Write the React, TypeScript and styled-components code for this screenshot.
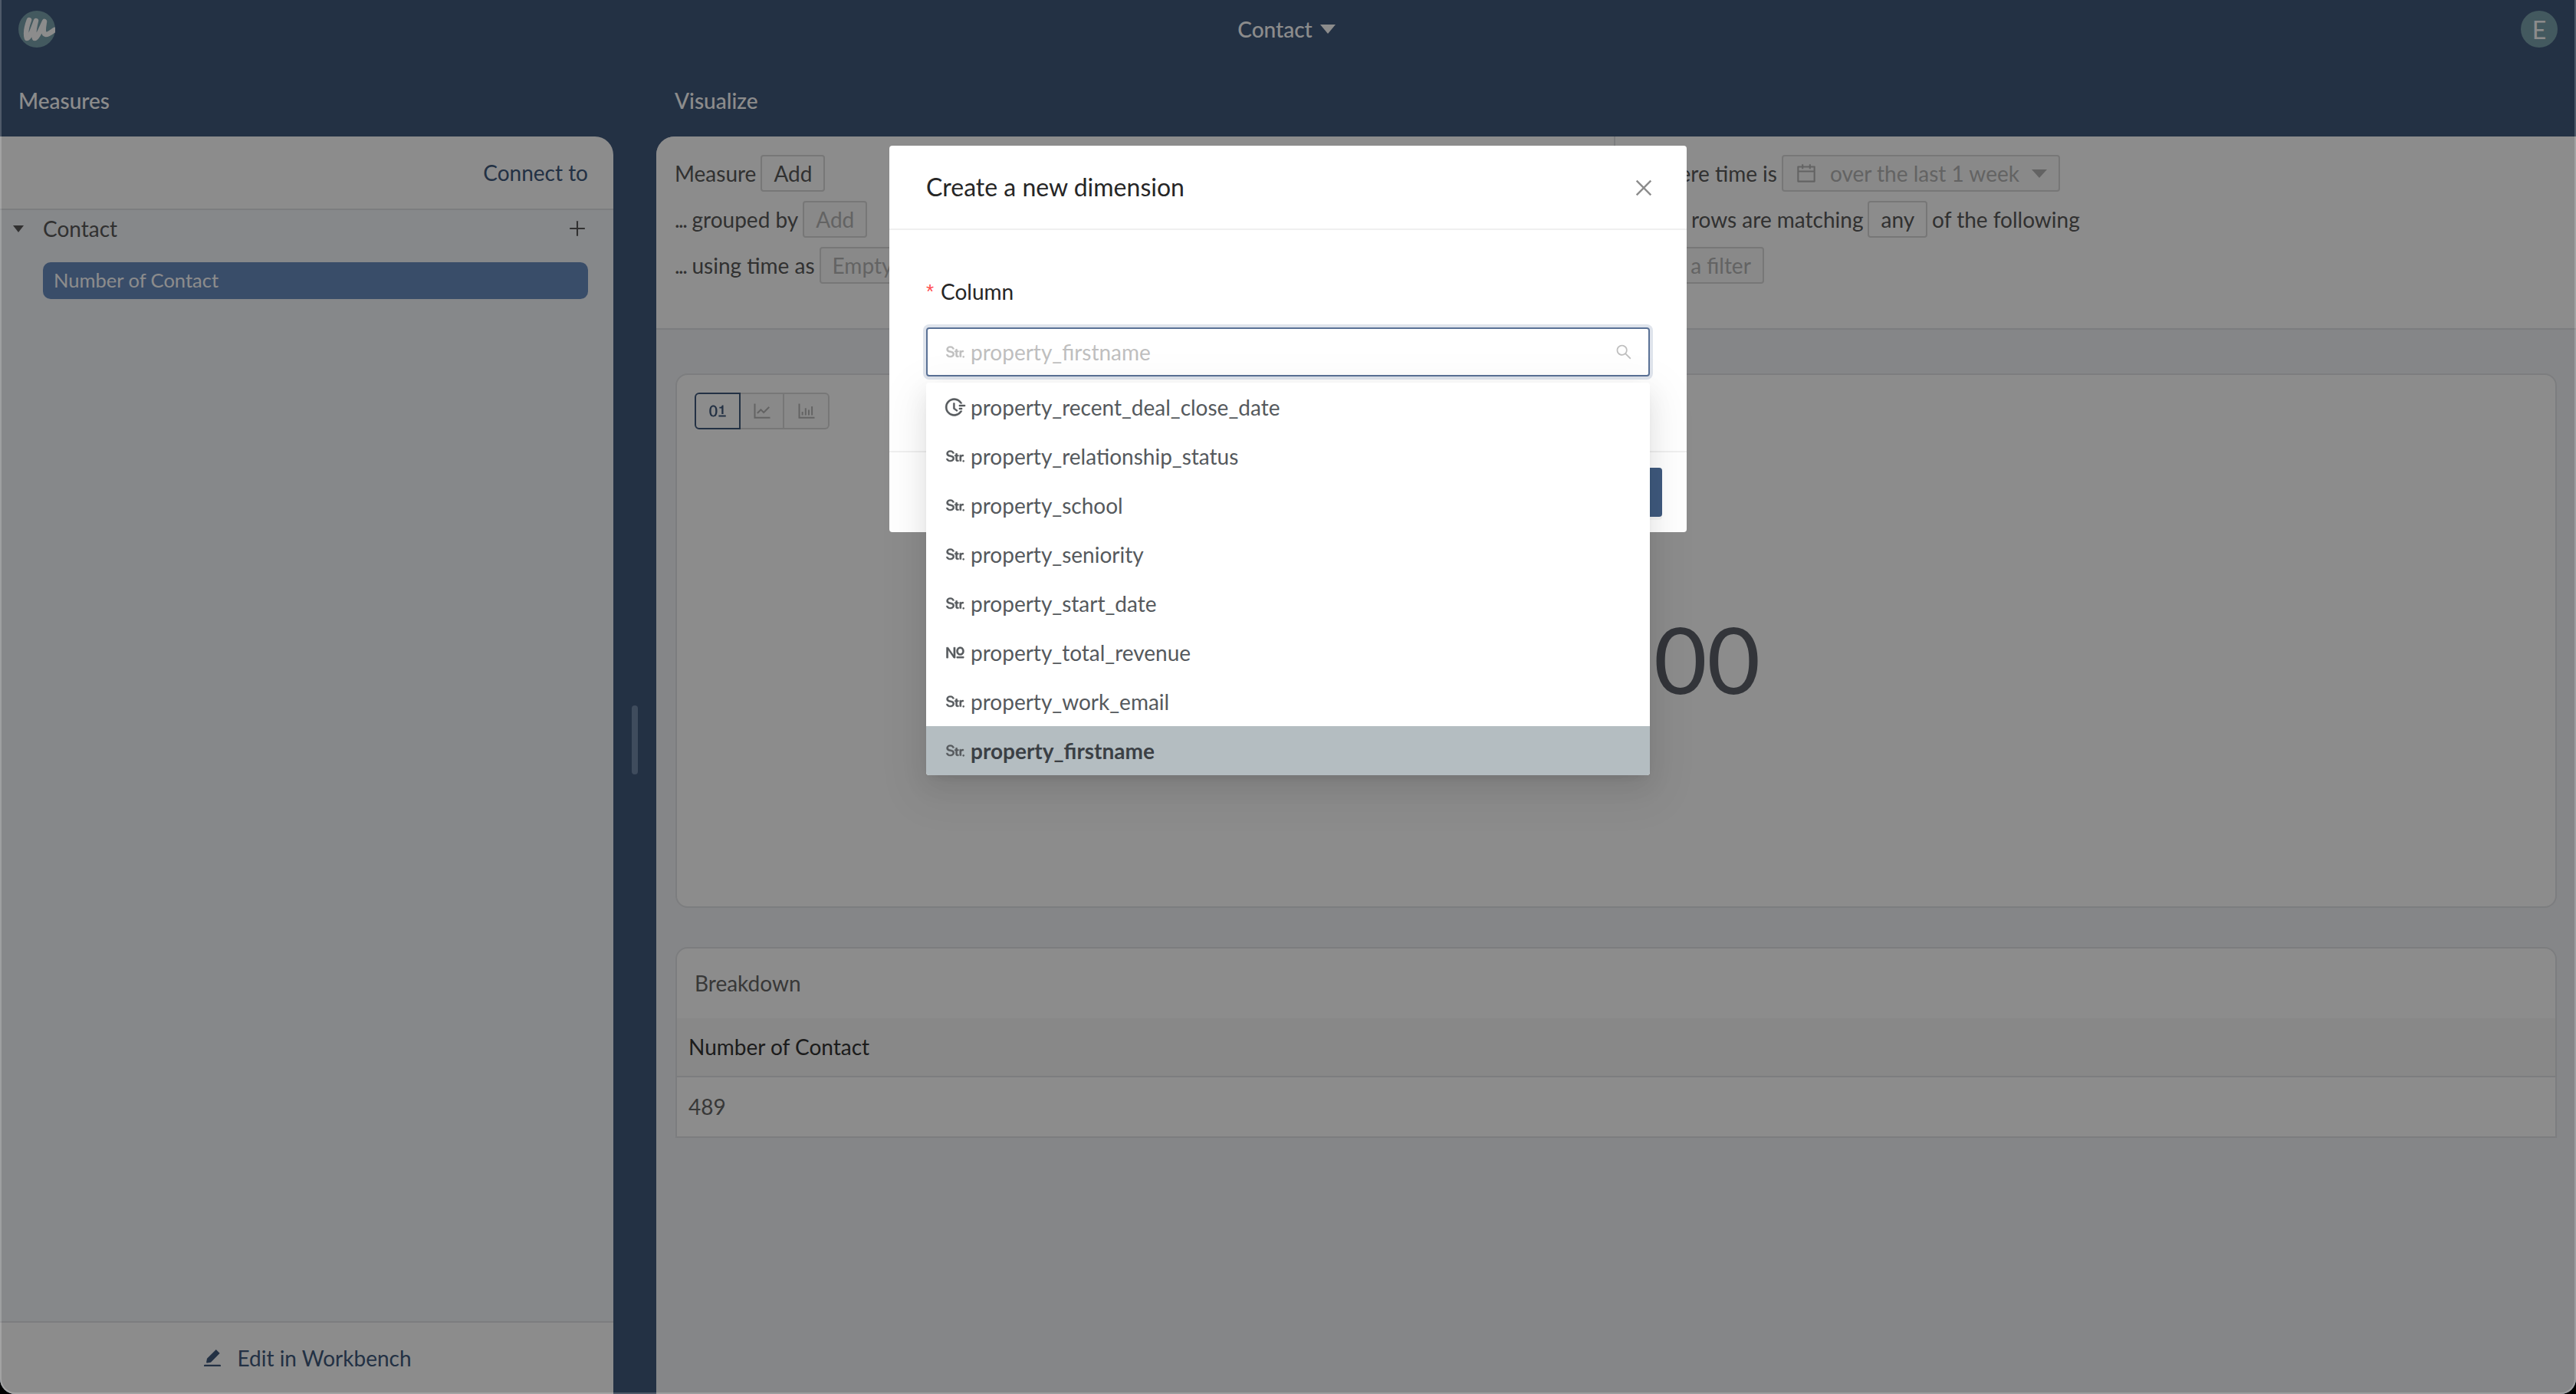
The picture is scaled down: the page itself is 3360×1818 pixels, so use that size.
import { type FC, type ReactNode } from 'react';
import {
  AiFillEdit,
  AiOutlineBarChart,
  AiOutlineCalendar,
  AiOutlineClose,
  AiOutlineFieldBinary,
  AiOutlineFieldNumber,
  AiOutlineFieldString,
  AiOutlineFieldTime,
  AiOutlineLineChart,
  AiOutlinePlus,
  AiOutlineSearch,
} from 'react-icons/ai';
import styled, { createGlobalStyle } from 'styled-components';

const GlobalStyle = createGlobalStyle`
  html, body {
    margin: 0;
    padding: 0;
    height: 1818px;
    overflow: hidden;
    background: #000;
  }
  * {
    box-sizing: border-box;
  }
  body {
    font-family: Lato, "Liberation Sans", sans-serif;
    font-size: 28px;
    color: #595959;
  }
`;

// ── Shell ──────────────────────────────────────────────────────────────────

const Shell = styled.div`
  position: relative;
  display: flex;
  flex-direction: column;
  width: 3360px;
  height: 1818px;
  overflow: hidden;
  background: #40597c;
  border-radius: 0 0 20px 20px;
`;

const TopBar = styled.header`
  display: flex;
  align-items: center;
  justify-content: space-between;
  height: 76px;
  padding: 0 24px;
  color: #fff;
`;

const Avatar = styled.div`
  display: flex;
  align-items: center;
  justify-content: center;
  width: 48px;
  height: 48px;
  border-radius: 50%;
  background: #7ba2ad;
  color: #fff;
  font-size: 32px;
`;

const TopTitle = styled.div`
  display: flex;
  align-items: center;
  gap: 10px;
  font-weight: 500;
  margin-right: 4px;
`;

const Caret = styled.span<{ $w: number; $h: number; $color: string }>`
  display: inline-block;
  flex-shrink: 0;
  width: 0;
  height: 0;
  border-left: ${(p) => p.$w / 2}px solid transparent;
  border-right: ${(p) => p.$w / 2}px solid transparent;
  border-top: ${(p) => p.$h}px solid ${(p) => p.$color};
`;

const Workspace = styled.div`
  display: flex;
  flex: 1;
  min-height: 0;
`;

const Column = styled.div<{ $width?: number }>`
  display: flex;
  flex-direction: column;
  flex: ${(p) => (p.$width ? `0 0 ${p.$width}px` : 1)};
  min-width: 0;
`;

const SectionTitle = styled.div<{ $inset: number }>`
  display: flex;
  align-items: center;
  height: 102px;
  padding: 8px 0 0 ${(p) => p.$inset}px;
  color: #fff;
  font-weight: 500;
`;

const SplitHandle = styled.div`
  flex: 0 0 56px;
  padding: 844px 24px 0;

  &::before {
    content: '';
    display: block;
    height: 90px;
    border-radius: 4px;
    background: #738aa9;
  }
`;

// ── Measures panel ─────────────────────────────────────────────────────────

const MeasuresPanel = styled.aside`
  display: flex;
  flex-direction: column;
  flex: 1;
  min-height: 0;
  background: #fff;
  border-radius: 0 24px 0 0;
  overflow: hidden;
`;

const ConnectBar = styled.div`
  display: flex;
  align-items: center;
  justify-content: flex-end;
  height: 96px;
  padding: 0 33px 0 0;
  border-bottom: 2px solid #e2e4e7;
  color: #40597c;
`;

const MeasureList = styled.div`
  flex: 1;
  background: #f5f7fb;
  padding: 0 33px 0 17px;
`;

const GroupRow = styled.div`
  display: flex;
  align-items: center;
  height: 48px;
  margin-bottom: 20px;
  color: #595959;
`;

const GroupName = styled.span`
  flex: 1;
  margin-left: 25px;
`;

const MeasureItem = styled.div`
  display: flex;
  align-items: center;
  height: 48px;
  margin-left: 39px;
  padding: 0 0 2px 14px;
  border-radius: 10px;
  background: #698cbf;
  color: #fff;
  font-size: 25.5px;
`;

const PanelFooter = styled.div`
  display: flex;
  align-items: center;
  justify-content: center;
  gap: 18px;
  height: 95px;
  padding-bottom: 2px;
  border-top: 2px solid #e2e4e7;
  color: #40597c;
`;

// ── Query builder ──────────────────────────────────────────────────────────

const VisualizePanel = styled.main`
  display: flex;
  flex-direction: column;
  flex: 1;
  min-height: 0;
  background: #f2f4f7;
  border-radius: 24px 0 0 0;
  overflow: hidden;
`;

const QueryBar = styled.section`
  display: grid;
  grid-template-columns: 1249px 1fr;
  height: 252px;
  background: #fff;
  border-bottom: 2px solid #e2e4e7;
`;

const QueryColumn = styled.div<{ $inset: number; $divided?: boolean }>`
  display: flex;
  flex-direction: column;
  gap: 12px;
  padding: 24px 0 0 ${(p) => p.$inset}px;
  border-left: ${(p) => (p.$divided ? '2px solid #e2e4e7' : 'none')};
`;

const QueryRow = styled.div`
  display: flex;
  align-items: center;
  gap: 6px;
  height: 48px;
  white-space: nowrap;
`;

const Dots = styled.span`
  letter-spacing: -1.5px;
`;

const PillButton = styled.div<{ $disabled?: boolean }>`
  display: inline-flex;
  align-items: center;
  gap: 16px;
  height: 48px;
  padding: 0 15px;
  border: 2px solid #d9d9d9;
  border-radius: 4px;
  color: ${(p) => (p.$disabled ? '#b5b5b5' : '#595959')};
  background: ${(p) => (p.$disabled ? '#fafafa' : '#fff')};
`;

// ── Cards ──────────────────────────────────────────────────────────────────

const CardStack = styled.div`
  display: flex;
  flex-direction: column;
  gap: 51px;
  padding: 57px 25px 0;
`;

const ChartCard = styled.section`
  display: flex;
  flex-direction: column;
  height: 697px;
  padding: 23px 23px 0;
  background: #fff;
  border: 2px solid #e2e4e7;
  border-radius: 16px;
`;

const VizToggle = styled.div`
  display: flex;
  align-self: flex-start;
  height: 48px;
`;

const VizOption = styled.div<{ $active?: boolean; $last?: boolean }>`
  display: flex;
  align-items: center;
  justify-content: center;
  width: ${(p) => (p.$active ? 60 : p.$last ? 59 : 57)}px;
  border: 2px solid ${(p) => (p.$active ? '#40597c' : '#d9d9d9')};
  border-left-width: ${(p) => (p.$active ? 2 : 0)}px;
  border-radius: ${(p) => (p.$active ? '6px 0 0 6px' : p.$last ? '0 6px 6px 0' : '0')};
  color: ${(p) => (p.$active ? '#40597c' : '#b5b5b5')};
  background: ${(p) => (p.$active ? '#fff' : '#fafafa')};
`;

const BigNumberArea = styled.div`
  display: flex;
  flex: 1;
  align-items: center;
  justify-content: center;
  padding-bottom: 24px;
`;

const BigNumber = styled.div`
  font-size: 120px;
  line-height: 1;
  color: #5d626b;
`;

const BreakdownCard = styled.section`
  display: flex;
  flex-direction: column;
  height: 249px;
  background: #fff;
  border: 2px solid #e2e4e7;
  border-radius: 16px 16px 0 0;
  overflow: hidden;
`;

const BreakdownTitle = styled.div`
  display: flex;
  align-items: center;
  height: 91px;
  padding: 0 0 2px 23px;
  color: #666;
`;

const TableHead = styled.div`
  display: flex;
  align-items: center;
  height: 77px;
  padding: 0 0 2px 15px;
  background: #f8f8f8;
  border-bottom: 2px solid #e2e4e7;
  color: #333;
`;

const TableCell = styled.div`
  display: flex;
  align-items: center;
  flex: 1;
  padding: 0 0 2px 15px;
  color: #666;
`;

// ── Modal ──────────────────────────────────────────────────────────────────

const Mask = styled.div`
  position: absolute;
  inset: 0;
  display: flex;
  justify-content: center;
  align-items: flex-start;
  padding-top: 190px;
  background: rgba(0, 0, 0, 0.45);
`;

const WindowEdge = styled.div`
  position: absolute;
  inset: 0;
  border: 2px solid rgba(255, 255, 255, 0.2);
  border-top: none;
  border-radius: 0 0 20px 20px;
  pointer-events: none;
`;

const Modal = styled.div`
  display: flex;
  flex-direction: column;
  width: 1040px;
  background: #fff;
  border-radius: 4px;
`;

const ModalHeader = styled.div`
  display: flex;
  align-items: center;
  justify-content: space-between;
  height: 110px;
  padding: 0 41px 2px 48px;
  border-bottom: 2px solid #f0f0f0;
  color: #262626;
  font-size: 32px;
`;

const CloseIcon = styled.span`
  display: flex;
  margin-top: 4px;
  color: #8c8c8c;
`;

const ModalBody = styled.div`
  height: 288px;
  padding: 66px 48px 0;
`;

const FieldLabel = styled.div`
  display: flex;
  align-items: center;
  height: 28px;
  margin-bottom: 33px;
  color: #262626;
`;

const Required = styled.span`
  width: 19px;
  color: #ff4d4f;
  font-family: "Liberation Sans", sans-serif;
  font-size: 26px;
  line-height: 1;
`;

const SelectBox = styled.div`
  position: relative;
  width: 944px;
`;

const SelectInput = styled.div`
  display: flex;
  align-items: center;
  gap: 5px;
  height: 64px;
  padding: 0 20px 0 21px;
  border: 2px solid #5a7196;
  border-radius: 4px;
  box-shadow: 0 0 0 4px #dfe4ec;
  color: #bfbfbf;
`;

const SelectValue = styled.span`
  flex: 1;
`;

const Dropdown = styled.ul`
  position: absolute;
  top: 72px;
  left: 0;
  width: 100%;
  margin: 0;
  padding: 0;
  list-style: none;
  overflow: hidden;
  background: #fff;
  border-radius: 4px;
  box-shadow: 0 12px 32px rgba(0, 0, 0, 0.08), 0 6px 12px -8px rgba(0, 0, 0, 0.12),
    0 18px 56px 16px rgba(0, 0, 0, 0.05);
`;

const DropdownItem = styled.li<{ $selected?: boolean }>`
  display: flex;
  align-items: center;
  gap: 5px;
  height: 64px;
  padding-left: 23px;
  color: ${(p) => (p.$selected ? '#3b4045' : '#55595d')};
  font-weight: ${(p) => (p.$selected ? 700 : 400)};
  background: ${(p) => (p.$selected ? '#b4bdc1' : 'transparent')};
`;

const TypeIcon = styled.span<{ $muted?: boolean }>`
  display: flex;
  flex: 0 0 30px;
  color: ${(p) => (p.$muted ? '#bfbfbf' : '#55595d')};

  svg {
    stroke-width: 16;
  }
`;

const ModalFooter = styled.div`
  display: flex;
  justify-content: flex-end;
  height: 106px;
  padding: 20px 32px 20px 0;
  border-top: 2px solid #f0f0f0;
`;

const PrimaryButton = styled.div`
  width: 160px;
  height: 64px;
  border-radius: 4px;
  background: #3f5a7e;
  box-shadow: 0 4px 0 rgba(0, 0, 0, 0.04);
`;

// ── Data ───────────────────────────────────────────────────────────────────

const Logo: FC = () => (
  <svg width="48" height="48" viewBox="0 0 48 48">
    <circle cx="24" cy="24" r="24" fill="#7ba2ad" />
    <path
      d="M14 12 C11 20 9 30 11 36 C15 36 20 21 23 13 C21 21 19 30 21 36 C25 36 30 22 34 14 C33 21 31 30 36 31 C40 31 44 27 47 25"
      fill="none"
      stroke="#fff"
      strokeWidth="6.5"
      strokeLinecap="round"
      strokeLinejoin="round"
    />
  </svg>
);

const columns: { name: string; icon: ReactNode }[] = [
  { name: 'property_recent_deal_close_date', icon: <AiOutlineFieldTime size={30} /> },
  { name: 'property_relationship_status', icon: <AiOutlineFieldString size={30} /> },
  { name: 'property_school', icon: <AiOutlineFieldString size={30} /> },
  { name: 'property_seniority', icon: <AiOutlineFieldString size={30} /> },
  { name: 'property_start_date', icon: <AiOutlineFieldString size={30} /> },
  { name: 'property_total_revenue', icon: <AiOutlineFieldNumber size={30} /> },
  { name: 'property_work_email', icon: <AiOutlineFieldString size={30} /> },
  { name: 'property_firstname', icon: <AiOutlineFieldString size={30} /> },
];

// ── Page ───────────────────────────────────────────────────────────────────

const App: FC = () => (
  <>
    <GlobalStyle />
    <Shell>
      <TopBar>
        <Logo />
        <TopTitle>
          Contact <Caret $w={20} $h={12} $color="#fff" />
        </TopTitle>
        <Avatar>E</Avatar>
      </TopBar>
      <Workspace>
        <Column $width={800}>
          <SectionTitle $inset={24}>Measures</SectionTitle>
          <MeasuresPanel>
            <ConnectBar>Connect to</ConnectBar>
            <MeasureList>
              <GroupRow>
                <Caret $w={14} $h={9} $color="#595959" />
                <GroupName>Contact</GroupName>
                <AiOutlinePlus size={28} />
              </GroupRow>
              <MeasureItem>Number of Contact</MeasureItem>
            </MeasureList>
            <PanelFooter>
              <AiFillEdit size={28} />
              Edit in Workbench
            </PanelFooter>
          </MeasuresPanel>
        </Column>
        <SplitHandle />
        <Column>
          <SectionTitle $inset={24}>Visualize</SectionTitle>
          <VisualizePanel>
            <QueryBar>
              <QueryColumn $inset={24}>
                <QueryRow>
                  Measure <PillButton>Add</PillButton>
                </QueryRow>
                <QueryRow>
                  <span>
                    <Dots>...</Dots> grouped by
                  </span>
                  <PillButton $disabled>Add</PillButton>
                </QueryRow>
                <QueryRow>
                  <span>
                    <Dots>...</Dots> using time as
                  </span>
                  <PillButton $disabled>Empty</PillButton>
                </QueryRow>
              </QueryColumn>
              <QueryColumn $inset={24} $divided>
                <QueryRow>
                  <span>
                    <Dots>...</Dots> where time is
                  </span>
                  <PillButton $disabled>
                    <AiOutlineCalendar size={30} />
                    over the last 1 week
                    <Caret $w={20} $h={11} $color="#b5b5b5" />
                  </PillButton>
                </QueryRow>
                <QueryRow>
                  <span>
                    <Dots>...</Dots> and rows are matching
                  </span>
                  <PillButton>any</PillButton> of the following
                </QueryRow>
                <QueryRow>
                  <PillButton $disabled>Add a filter</PillButton>
                </QueryRow>
              </QueryColumn>
            </QueryBar>
            <CardStack>
              <ChartCard>
                <VizToggle>
                  <VizOption $active>
                    <AiOutlineFieldBinary size={30} />
                  </VizOption>
                  <VizOption>
                    <AiOutlineLineChart size={28} />
                  </VizOption>
                  <VizOption $last>
                    <AiOutlineBarChart size={28} />
                  </VizOption>
                </VizToggle>
                <BigNumberArea>
                  <BigNumber>489.00</BigNumber>
                </BigNumberArea>
              </ChartCard>
              <BreakdownCard>
                <BreakdownTitle>Breakdown</BreakdownTitle>
                <TableHead>Number of Contact</TableHead>
                <TableCell>489</TableCell>
              </BreakdownCard>
            </CardStack>
          </VisualizePanel>
        </Column>
      </Workspace>
      <Mask>
        <Modal>
          <ModalHeader>
            Create a new dimension
            <CloseIcon>
              <AiOutlineClose size={30} />
            </CloseIcon>
          </ModalHeader>
          <ModalBody>
            <FieldLabel>
              <Required>*</Required>
              Column
            </FieldLabel>
            <SelectBox>
              <SelectInput>
                <TypeIcon $muted>
                  <AiOutlineFieldString size={30} />
                </TypeIcon>
                <SelectValue>property_firstname</SelectValue>
                <AiOutlineSearch size={24} />
              </SelectInput>
              <Dropdown>
                {columns.map((c) => (
                  <DropdownItem key={c.name} $selected={c.name === 'property_firstname'}>
                    <TypeIcon>{c.icon}</TypeIcon>
                    {c.name}
                  </DropdownItem>
                ))}
              </Dropdown>
            </SelectBox>
          </ModalBody>
          <ModalFooter>
            <PrimaryButton />
          </ModalFooter>
        </Modal>
      </Mask>
      <WindowEdge />
    </Shell>
  </>
);

export default App;
